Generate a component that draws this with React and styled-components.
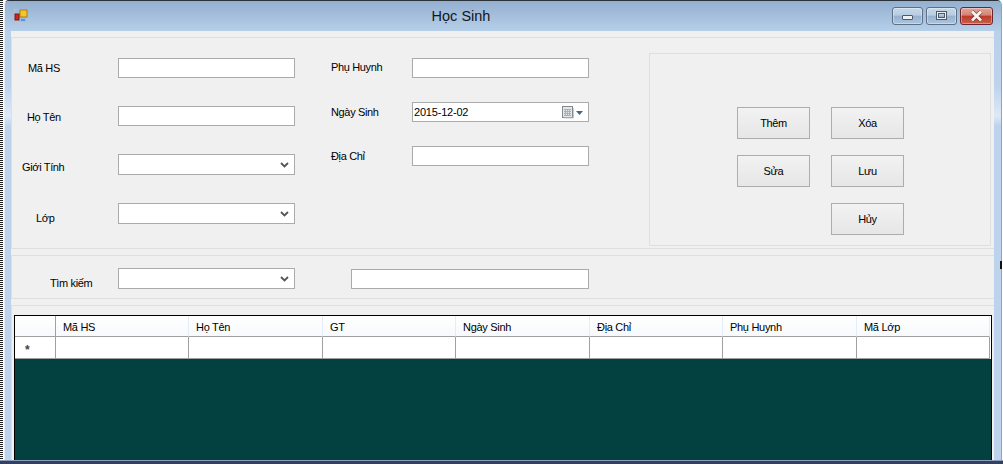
import React from "react";
import styled, { createGlobalStyle } from "styled-components";

const GlobalStyle = createGlobalStyle`
  html, body {
    margin: 0;
    padding: 0;
    width: 1003px;
    height: 464px;
    overflow: hidden;
    background: #fff;
    font-family: "Liberation Sans", Arial, sans-serif;
    font-size: 11px;
    color: #000;
  }
  * { box-sizing: border-box; }
`;

const Screen = styled.div`
  position: relative;
  display: flex;
  flex-direction: column;
  width: 1003px;
  height: 464px;
  overflow: hidden;
`;

const Desk = styled.div`
  display: flex;
  flex: 1;
  min-height: 0;
`;

const DottedEdge = styled.div`
  width: 3px;
  background: repeating-linear-gradient(to bottom, #222 0 1px, #fff 1px 2px);
`;

const Win = styled.div`
  flex: 1;
  margin-left: 1px;
  margin-right: 1px;
  display: flex;
  flex-direction: column;
  border-top: 1px solid #2b3138;
  border-left: 1px solid #e8eef5;
  border-right: 1px solid #35c8f0;
  border-radius: 5px 5px 0 0;
  background: linear-gradient(to bottom, #b7cfe9 0, #bdd3ec 85px, #dde9f6 115px, #bdd3ec 125px, #bdd3ec 100%);
`;

const TitleBar = styled.div`
  height: 30px;
  display: flex;
  align-items: center;
  padding: 0 8px 0 9px;
  background: linear-gradient(to bottom, #94b0cf, #b6cfe9);
  border-radius: 4px 4px 0 0;
`;

const Title = styled.div`
  flex: 1;
  text-align: center;
  font-size: 14.5px;
  padding-left: 2px;
  color: #10161c;
`;

const WinButtons = styled.div`
  display: flex;
  gap: 3px;
  margin-top: -1px;
`;

const WinButton = styled.div`
  width: ${(p) => (p.$close ? "33px" : "31px")};
  height: 18px;
  display: flex;
  align-items: center;
  justify-content: center;
  border: 1px solid ${(p) => (p.$close ? "#6b2530" : "#5f6f85")};
  border-radius: 3px;
  background: ${(p) =>
    p.$close
      ? "linear-gradient(to bottom, #e0a49a 0, #d68474 45%, #bb3a26 50%, #c8614b 100%)"
      : "linear-gradient(to bottom, #c6d8ea 0, #b8cde3 45%, #94b1cf 50%, #adc5de 100%)"};
  box-shadow: inset 0 0 0 1px rgba(255, 255, 255, 0.35);
`;

const MinGlyph = styled.div`
  width: 11px;
  height: 5px;
  margin-top: 3px;
  background: #eef1f4;
  border: 1px solid #4e5a6b;
  border-radius: 1px;
`;

const MaxGlyph = styled.div`
  width: 11px;
  height: 9px;
  background: transparent;
  border: 2px solid #eef1f4;
  outline: 1px solid #4e5a6b;
  outline-offset: -1px;
  box-shadow: inset 0 0 0 1px #4e5a6b;
`;

const Client = styled.div`
  flex: 1;
  min-height: 0;
  margin: 0 7px 0 6px;
  padding-top: 6px;
  display: flex;
  flex-direction: column;
  gap: 6px;
  background: #f0f0f0;
`;

const Panel = styled.div`
  height: ${(p) => p.$h}px;
  flex: ${(p) => (p.$grow ? "1" : "none")};
  display: flex;
  border-top: 1px solid #dfdfdf;
  border-bottom: ${(p) => (p.$grow ? "none" : "1px solid #dfdfdf")};
  border-left: 1px solid #dfdfdf;
`;

const FieldColumn = styled.div`
  width: ${(p) => p.$w}px;
  padding-top: 20px;
  display: flex;
  flex-direction: column;
`;

const Field = styled.div`
  height: ${(p) => p.$h}px;
  display: grid;
  grid-template-columns: ${(p) => p.$label}px 177px;
  align-items: start;
`;

const Label = styled.label`
  font-size: 11px;
  letter-spacing: -0.35px;
  line-height: 14px;
  white-space: nowrap;
  margin-left: ${(p) => p.$indent}px;
  margin-top: ${(p) => p.$drop}px;
`;

const TextBox = styled.div`
  height: 20px;
  width: ${(p) => p.$w || 177}px;
  margin-top: ${(p) => p.$top || 0}px;
  background: #fff;
  border: 1px solid #ababab;
`;

const DateBox = styled(TextBox)`
  display: flex;
  align-items: center;
  justify-content: space-between;
  padding: 0 5px 0 1px;
  font-size: 11px;
  letter-spacing: -0.2px;
`;

const CalendarIcons = styled.div`
  display: flex;
  align-items: center;
  gap: 2px;
  margin-top: 1px;
`;

const SelectBox = styled(TextBox)`
  height: 21px;
  display: flex;
  align-items: center;
  justify-content: flex-end;
  padding-right: 4px;
`;

const ButtonBox = styled.div`
  margin: 15px 0 0 0;
  width: 342px;
  height: 193px;
  border: 1px solid #dfdfdf;
  padding: 53px 0 0 87px;
  display: grid;
  grid-template-columns: 73px 73px;
  grid-auto-rows: 32px;
  column-gap: 21px;
  row-gap: 16px;
`;

const Action = styled.button`
  grid-column: ${(p) => p.$col || "auto"};
  font-family: inherit;
  font-size: 11px;
  letter-spacing: -0.35px;
  color: #000;
  padding: 0;
  background: linear-gradient(to bottom, #f2f2f2, #e6e6e6);
  border: 1px solid #adadad;
`;

const SearchPanelRow = styled.div`
  padding-top: 12px;
  display: grid;
  grid-template-columns: 106px 177px 56px 238px;
  align-items: start;
`;

const DataGrid = styled.div`
  margin: 9px 0 0 2px;
  width: 978px;
  flex: none;
  border: 1px solid #000;
  border-bottom: none;
  background: #034040;
  display: flex;
  flex-direction: column;
`;

const GridRow = styled.div`
  height: ${(p) => p.$h}px;
  padding-right: 1px;
  display: grid;
  grid-template-columns: 41px 133px 134px 133px 134px 133px 134px 133px;
  grid-template-rows: 100%;
  background: #fff;
`;

const HeadCell = styled.div`
  padding: 2px 0 0 7px;
  font-size: 11px;
  letter-spacing: -0.3px;
  line-height: 19px;
  background: linear-gradient(to bottom, #fff, #f7f9fc);
  border-right: 1px solid ${(p) => (p.$strong ? "#a0a0a0" : "#e3ecf8")};
  border-bottom: 1px solid #a0a0a0;
`;

const Cell = styled.div`
  padding: 4px 0 0 10px;
  display: flex;
  align-items: center;
  font-weight: bold;
  font-size: 12px;
  color: #444;
  background: #fff;
  border-right: 1px solid #a0a0a0;
  border-bottom: 1px solid #a0a0a0;
`;

const TaskEdge = styled.div`
  height: 4px;
  background: #33415f;
  border-top: 1px solid #8b9bbb;
`;

const ResizeCursor = styled.div`
  position: absolute;
  left: 1000px;
  top: 261px;
  width: 2px;
  height: 8px;
  background: #111;
`;

const COLUMNS = ["Mã HS", "Họ Tên", "GT", "Ngày Sinh", "Địa Chỉ", "Phụ Huynh", "Mã Lớp"];

const AppIcon = () => (
  <svg width="14" height="14" viewBox="0 0 14 14" style={{ display: "block" }}>
    <rect x="0.5" y="0.5" width="13" height="13" fill="none" stroke="#b9c4d2" strokeOpacity="0.6" />
    <rect x="6" y="1" width="7" height="7" fill="#f6c52c" stroke="#a87a12" />
    <rect x="1" y="5" width="4" height="6" fill="#c9261c" stroke="#7b1a14" />
    <rect x="6.5" y="9.5" width="5" height="3" fill="#5a93dc" stroke="#9dbde6" />
  </svg>
);

const Chevron = () => (
  <svg width="9" height="6" viewBox="0 0 9 6" style={{ marginRight: 1 }}>
    <path d="M1 1l3.5 3.5L8 1" fill="none" stroke="#555" strokeWidth="1.8" />
  </svg>
);

const CalendarIcon = () => (
  <svg width="12" height="13" viewBox="0 0 12 13">
    <rect x="0.5" y="0.5" width="10" height="11" fill="#e4e7ea" stroke="#85888c" />
    <path d="M2 3.5h7M2 5.5h7M2 7.5h7M2 9.5h7M3.5 3v7M5.5 3v7M7.5 3v7" stroke="#a9b0b8" />
    <path d="M11.5 2v10H2" fill="none" stroke="#c9c9c9" />
  </svg>
);

const DropArrow = () => (
  <svg width="7" height="4" viewBox="0 0 7 4">
    <path d="M0 0h7L3.5 4z" fill="#4d6185" />
  </svg>
);

const CloseGlyph = () => (
  <svg width="15" height="12" viewBox="0 0 15 12">
    <path d="M3 1.5l9 9M12 1.5l-9 9" stroke="#4a1a1a" strokeWidth="4.2" strokeOpacity="0.55" />
    <path d="M3 1.5l9 9M12 1.5l-9 9" stroke="#f4f4f4" strokeWidth="2.8" />
  </svg>
);

const App = () => {
  return (
    <Screen>
      <GlobalStyle />
      <Desk>
        <DottedEdge />
        <Win>
          <TitleBar>
            <AppIcon />
            <Title>Học Sinh</Title>
            <WinButtons>
              <WinButton><MinGlyph /></WinButton>
              <WinButton><MaxGlyph /></WinButton>
              <WinButton $close><CloseGlyph /></WinButton>
            </WinButtons>
          </TitleBar>
          <Client>
            <Panel $h={212}>
              <FieldColumn $w={319}>
                <Field $h={48} $label={106}>
                  <Label $indent={16} $drop={3}>Mã HS</Label>
                  <TextBox />
                </Field>
                <Field $h={48} $label={106}>
                  <Label $indent={15} $drop={4}>Họ Tên</Label>
                  <TextBox />
                </Field>
                <Field $h={49} $label={106}>
                  <Label $indent={10} $drop={6}>Giới Tính</Label>
                  <SelectBox><Chevron /></SelectBox>
                </Field>
                <Field $h={21} $label={106}>
                  <Label $indent={24} $drop={8}>Lớp</Label>
                  <SelectBox><Chevron /></SelectBox>
                </Field>
              </FieldColumn>
              <FieldColumn $w={318}>
                <Field $h={44} $label={81}>
                  <Label $indent={0} $drop={2}>Phụ Huynh</Label>
                  <TextBox />
                </Field>
                <Field $h={44} $label={81}>
                  <Label $indent={0} $drop={3}>Ngày Sinh</Label>
                  <DateBox>
                    2015-12-02
                    <CalendarIcons><CalendarIcon /><DropArrow /></CalendarIcons>
                  </DateBox>
                </Field>
                <Field $h={20} $label={81}>
                  <Label $indent={0} $drop={3}>Địa Chỉ</Label>
                  <TextBox />
                </Field>
              </FieldColumn>
              <ButtonBox>
                <Action>Thêm</Action>
                <Action>Xóa</Action>
                <Action>Sửa</Action>
                <Action>Lưu</Action>
                <Action $col="2">Hủy</Action>
              </ButtonBox>
            </Panel>
            <Panel $h={44}>
              <SearchPanelRow>
                <Label $indent={38} $drop={8}>Tìm kiếm</Label>
                <SelectBox><Chevron /></SelectBox>
                <span />
                <TextBox $w={238} $top={1} />
              </SearchPanelRow>
            </Panel>
            <Panel $grow>
              <DataGrid>
                <GridRow $h={21}>
                  <HeadCell $strong />
                  {COLUMNS.map((name) => (
                    <HeadCell key={name}>{name}</HeadCell>
                  ))}
                </GridRow>
                <GridRow $h={22}>
                  <Cell>*</Cell>
                  {COLUMNS.map((name) => (
                    <Cell key={name} />
                  ))}
                </GridRow>
              </DataGrid>
            </Panel>
          </Client>
        </Win>
      </Desk>
      <TaskEdge />
      <ResizeCursor />
    </Screen>
  );
};

export default App;
